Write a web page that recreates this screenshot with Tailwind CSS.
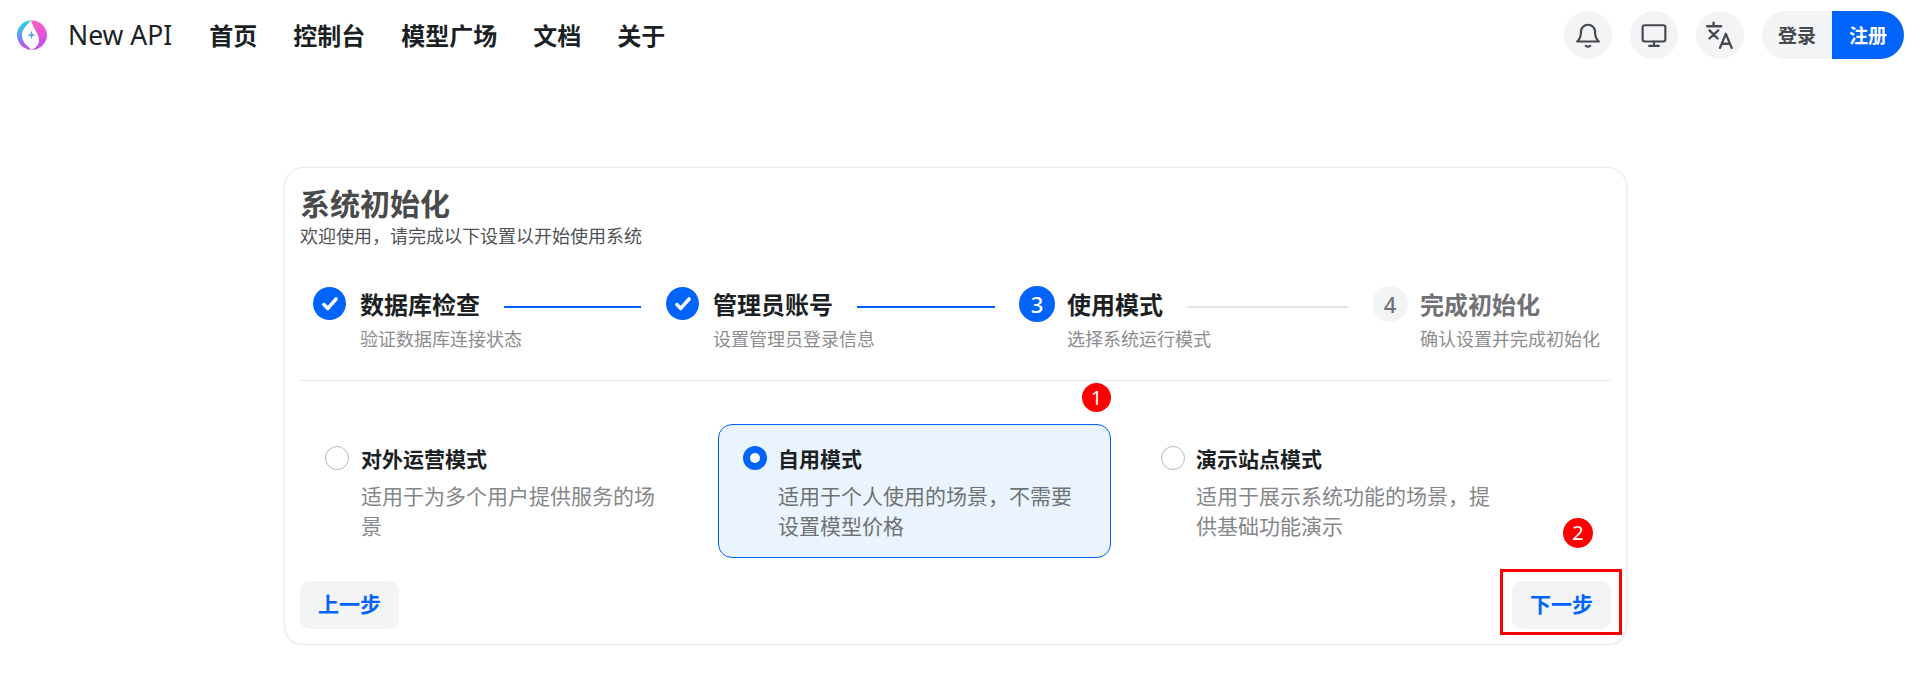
<!DOCTYPE html>
<html lang="zh-CN">
<head>
<meta charset="utf-8">
<title>系统初始化 - New API</title>
<script src="https://cdn.jsdelivr.net/npm/@tailwindcss/browser@4"></script>
</head>
<body class="bg-white font-['Noto_Sans','Noto_Sans_CJK_SC',sans-serif] text-[#1c1f23] overflow-hidden">

  <!-- 顶部导航 -->
  <header class="h-[70px] flex items-center pl-4 pr-[3px]">
    <svg class="w-[32px] h-[32px]" viewBox="0 0 32 32">
      <defs>
        <linearGradient id="logoLeft" x1="0.6" y1="0" x2="0.6" y2="1">
          <stop offset="0" stop-color="#25dde0"/><stop offset="0.5" stop-color="#5a9ff8"/><stop offset="1" stop-color="#d23cf0"/>
        </linearGradient>
        <linearGradient id="logoRight" x1="0.3" y1="0" x2="0.5" y2="1">
          <stop offset="0" stop-color="#ff5fc0"/><stop offset="1" stop-color="#c44cf0"/>
        </linearGradient>
      </defs>
      <path d="M15 1C6 2 1 9 1 16c0 8 6 14 14 15-2-4-9-6-9-15C6 9 12 6 15 1z" fill="url(#logoLeft)"/>
      <path d="M15 1.500c8-1 16 6 16 14.500 0 8-7 15-15 15 5-3 7-6 7-10 0-6-6-12-8-19.500z" fill="url(#logoRight)"/>
      <path d="M15.500 11.500l1 3.500 3.500 1-3.500 1-1 3.500-1-3.500-3.500-1 3.500-1z" fill="#4aa8f5"/>
    </svg>
    <span class="ml-[20px] text-[26.500px] pt-[2px]">New API</span>
    <nav class="ml-[37px] flex gap-[36px] text-[24px] font-semibold pt-[2px]">
      <a href="#">首页</a>
      <a href="#">控制台</a>
      <a href="#">模型广场</a>
      <a href="#">文档</a>
      <a href="#">关于</a>
    </nav>
    <div class="ml-auto flex items-center gap-[18px] text-[#46494d]">
      <button class="w-[48px] h-[48px] rounded-full bg-[#f3f4f5] flex items-center justify-center">
        <svg class="w-[26px] h-[26px]" viewBox="0 0 24 24" fill="none" stroke="currentColor" stroke-width="2" stroke-linecap="round" stroke-linejoin="round">
          <path d="M5.500 9a6.500 6.500 0 0 1 13 0c0 4 1 7 3.500 9H2c2.500-2 3.500-5 3.500-9z"/><path d="M10 22c1 .7 3 .7 4 0"/>
        </svg>
      </button>
      <button class="w-[48px] h-[48px] rounded-full bg-[#f3f4f5] flex items-center justify-center">
        <svg class="w-[26px] h-[26px]" viewBox="0 0 24 24" fill="none" stroke="currentColor" stroke-width="2" stroke-linecap="round" stroke-linejoin="round">
          <rect x="1.500" y="3" width="21" height="15" rx="2"/><path d="M12 18v4M7.500 22h9"/>
        </svg>
      </button>
      <button class="w-[48px] h-[48px] rounded-full bg-[#f3f4f5] flex items-center justify-center">
        <svg class="w-[28px] h-[28px]" viewBox="0 0 24 24" fill="none" stroke="currentColor" stroke-width="2" stroke-linecap="round" stroke-linejoin="round">
          <path d="M1 4.500h12M6.500 1.500v3M3 8l7 7M10.500 8l-7.500 7"/><path d="M12 23l5-12 5 12M13.500 19.500h7"/>
        </svg>
      </button>
      <div class="flex h-[48px] text-[19px] font-bold">
        <a href="#" class="w-[70px] flex items-center justify-center bg-[#f3f4f5] rounded-l-full pt-[2px]">登录</a>
        <a href="#" class="w-[72px] flex items-center justify-center bg-[#0064fa] text-white rounded-r-full pt-[2px]">注册</a>
      </div>
    </div>
  </header>

  <main class="pt-[97px] pl-[284px]">
    <section class="relative w-[1343px] h-[478px] rounded-[20px] border border-[#e8e9ea] shadow-[0_1px_3px_rgba(0,0,0,0.1)] px-[15px] flex flex-col">
      <h1 class="mt-[16px] text-[30px] leading-[40px] font-bold text-[#4a4a4a]">系统初始化</h1>
      <p class="mt-[-1px] text-[18px] leading-[26px] text-[#4f5256]">欢迎使用，请完成以下设置以开始使用系统</p>

      <!-- 步骤条 -->
      <div class="mt-[37px] pl-[13px] grid grid-cols-[353px_353px_353px_auto]">
        <div class="flex">
          <span class="w-[33px] h-[33px] mt-[1px] shrink-0 rounded-full bg-[#0064fa] flex items-center justify-center">
            <svg class="w-[20px] h-[20px]" viewBox="0 0 18 18" fill="none" stroke="white" stroke-width="3.200" stroke-linecap="round" stroke-linejoin="round"><path d="M3.500 9.500l3.500 3.500 7.500-8.500"/></svg>
          </span>
          <div class="ml-[14px] flex-1">
            <div class="flex items-center pt-[1px] pr-[25px]">
              <h3 class="text-[24px] leading-[36px] font-bold">数据库检查</h3>
              <span class="flex-1 h-[2px] ml-[24px] mt-[3px] bg-[#0064fa]"></span>
            </div>
            <p class="mt-[3px] text-[18px] leading-[26px] text-[#8b8d90]">验证数据库连接状态</p>
          </div>
        </div>
        <div class="flex">
          <span class="w-[33px] h-[33px] mt-[1px] shrink-0 rounded-full bg-[#0064fa] flex items-center justify-center">
            <svg class="w-[20px] h-[20px]" viewBox="0 0 18 18" fill="none" stroke="white" stroke-width="3.200" stroke-linecap="round" stroke-linejoin="round"><path d="M3.500 9.500l3.500 3.500 7.500-8.500"/></svg>
          </span>
          <div class="ml-[14px] flex-1">
            <div class="flex items-center pt-[1px] pr-[24px]">
              <h3 class="text-[24px] leading-[36px] font-bold">管理员账号</h3>
              <span class="flex-1 h-[2px] ml-[24px] mt-[3px] bg-[#0064fa]"></span>
            </div>
            <p class="mt-[3px] text-[18px] leading-[26px] text-[#8b8d90]">设置管理员登录信息</p>
          </div>
        </div>
        <div class="flex">
          <span class="w-[36px] h-[36px] shrink-0 rounded-full bg-[#0064fa] text-white text-[22px] font-medium flex items-center justify-center">3</span>
          <div class="ml-[12px] flex-1">
            <div class="flex items-center pt-[1px] pr-[24px]">
              <h3 class="text-[24px] leading-[36px] font-bold">使用模式</h3>
              <span class="flex-1 h-[2px] ml-[24px] mt-[3px] bg-[#e3e4e5]"></span>
            </div>
            <p class="mt-[3px] text-[18px] leading-[26px] text-[#8b8d90]">选择系统运行模式</p>
          </div>
        </div>
        <div class="flex">
          <span class="w-[36px] h-[36px] shrink-0 rounded-full bg-[#f3f4f5] text-[#6f7277] text-[22px] font-medium flex items-center justify-center">4</span>
          <div class="ml-[12px]">
            <h3 class="pt-[1px] text-[24px] leading-[36px] font-bold text-[#6f7174]">完成初始化</h3>
            <p class="mt-[3px] text-[18px] leading-[26px] text-[#8b8d90]">确认设置并完成初始化</p>
          </div>
        </div>
      </div>

      <div class="mt-[28px] h-px bg-[#e8e9ea]"></div>

      <!-- 模式选择 -->
      <div class="mt-[43px] flex gap-[25px]">
        <div class="w-[393px] h-[134px] rounded-[14px] border border-transparent pt-[19px] pl-[24px] pr-[23px] flex">
          <span class="w-[24px] h-[24px] mt-[2px] shrink-0 rounded-full border border-[#b5b7ba]"></span>
          <div class="ml-[12px]">
            <h4 class="text-[21px] leading-[30px] font-bold">对外运营模式</h4>
            <p class="mt-[7px] text-[21px] leading-[30px] text-[#85878a]">适用于为多个用户提供服务的场景</p>
          </div>
        </div>
        <div class="w-[393px] h-[134px] rounded-[14px] border border-[#0064fa] bg-[#eaf4fe] pt-[19px] pl-[24px] pr-[23px] flex">
          <span class="w-[24px] h-[24px] mt-[2px] shrink-0 rounded-full bg-[#0064fa] flex items-center justify-center">
            <span class="w-[10px] h-[10px] rounded-full bg-white"></span>
          </span>
          <div class="ml-[11px]">
            <h4 class="text-[21px] leading-[30px] font-bold">自用模式</h4>
            <p class="mt-[7px] text-[21px] leading-[30px] text-[#6f7275]">适用于个人使用的场景，不需要设置模型价格</p>
          </div>
        </div>
        <div class="w-[393px] h-[134px] rounded-[14px] border border-transparent pt-[19px] pl-[24px] pr-[23px] flex">
          <span class="w-[24px] h-[24px] mt-[2px] shrink-0 rounded-full border border-[#b5b7ba]"></span>
          <div class="ml-[11px]">
            <h4 class="text-[21px] leading-[30px] font-bold">演示站点模式</h4>
            <p class="mt-[7px] text-[21px] leading-[30px] text-[#85878a]">适用于展示系统功能的场景，提供基础功能演示</p>
          </div>
        </div>
      </div>

      <!-- 底部按钮 -->
      <div class="mt-[23px] flex justify-between">
        <button class="w-[99px] h-[48px] rounded-[10px] bg-[#f3f4f5] text-[#0064fa] text-[21px] font-bold">上一步</button>
        <button class="w-[99px] h-[48px] rounded-[10px] bg-[#f3f4f5] text-[#0064fa] text-[21px] font-bold">下一步</button>
      </div>

      <!-- 标注 -->
      <span class="absolute left-[797px] top-[215px] w-[29px] h-[29px] rounded-full bg-[#ff0000] text-white text-[20px] flex items-center justify-center">1</span>
      <span class="absolute left-[1278px] top-[350px] w-[30px] h-[30px] rounded-full bg-[#ff0000] text-white text-[20px] flex items-center justify-center">2</span>
      <span class="absolute left-[1215px] top-[401px] w-[122px] h-[66px] border-[3px] border-[#ff0000]"></span>
    </section>
  </main>
</body>
</html>
